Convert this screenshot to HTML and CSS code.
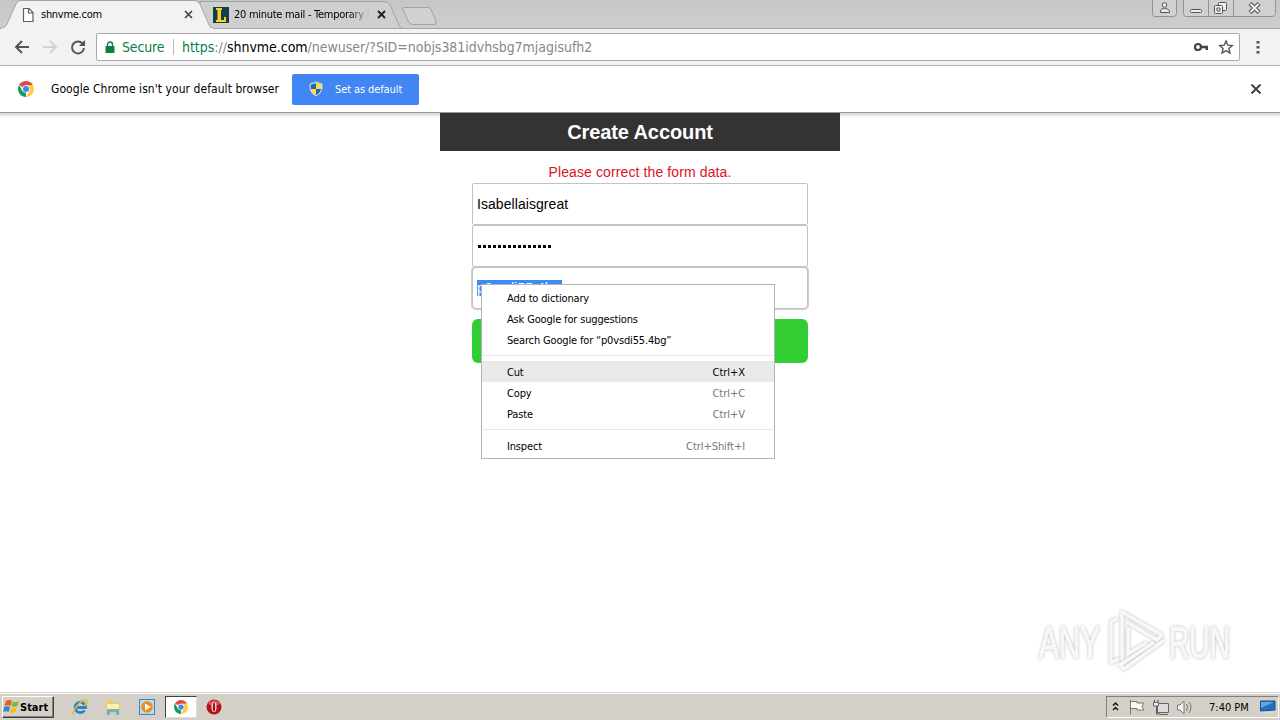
FILE: index.html
```html
<!DOCTYPE html>
<html lang="en">
<head>
<meta charset="utf-8">
<title>Create Account</title>
<link rel="stylesheet" href="styles.css">
</head>
<body>
<svg width="0" height="0" class="defs">
  <symbol id="chrome" viewBox="0 0 16 16">
    <path fill="#dd4b3e" d="M8 8 1.1 4A8 8 0 0 1 14.9 4Z"/>
    <path fill="#109d58" d="M8 8 8 16A8 8 0 0 1 1.1 4L4.5 10Z"/>
    <path fill="#ffcd42" d="M8 8 8 4H14.9A8 8 0 0 1 8 16L11.5 10Z"/>
    <circle cx="8" cy="8" r="3.8" fill="#f5f5f5"/><circle cx="8" cy="8" r="3" fill="#4285f4"/>
  </symbol>
</svg>

<header class="tabstrip">
  <svg class="tab-shapes" width="1280" height="29">
    <path d="M200 1.500H384Q388 1.500 390 5L399 25Q400 28.500 404 28.500H200Z" fill="#cfcfcf" stroke="#a2a2a2"/>
    <path d="M404 7.500H428Q430 7.500 431 9.500L436 21Q437 24.500 434 24.500H413Q410 24.500 409 22.500L403 10Q402 7.500 404 7.500Z" fill="#d1d1d1" stroke="#a2a2a2"/>
    <path d="M0 28.500H1280" stroke="#a5a5a5"/>
    <path d="M0 29V28.500Q5 28.500 7 24L16 4Q17.500.5 21 .5H194Q198 .5 200 4L209 25Q210.500 28.500 214 28.500V29Z" fill="#f2f2f2" stroke="#a5a5a5"/>
    <path d="M2 29H213" stroke="#f2f2f2" stroke-width="2"/>
  </svg>
  <div class="tab tab-one">
    <svg width="16" height="16" viewBox="0 0 16 16"><path d="M3.500 1.500H9L13 5.500V14.500H3.500ZM8.500 1.500V6H13" fill="#fff" stroke="#606060" stroke-width="1.200"/></svg>
    <span class="tab-title">shnvme.com</span>
    <svg class="tab-close" width="9" height="9" viewBox="0 0 9 9"><path d="M1 1 8 8M8 1 1 8" stroke="#444" stroke-width="1.700"/></svg>
  </div>
  <div class="tab tab-two">
    <svg width="16" height="16" viewBox="0 0 16 16"><path fill="#123f4c" d="M0 0H16V16H0Z"/><path d="M3 1H9V3H8V13H11V10H13V15H3V13H4.500V3H3Z" fill="#ffd11a"/></svg>
    <span class="tab-title faded">20 minute mail - Temporary E</span>
    <svg class="tab-close" width="9" height="9" viewBox="0 0 9 9"><path d="M1 1 8 8M8 1 1 8" stroke="#222" stroke-width="1.900"/></svg>
  </div>
  <svg class="window-buttons" width="130" height="18" viewBox="1150 0 130 18">
    <g fill="#d0d0d0" stroke="#929292"><path d="M1152.500 0V13.500Q1152.500 16.500 1155 16.500H1173Q1176.500 16.500 1176.500 13.500V0"/><path d="M1183.500 0V13.500Q1183.500 16.500 1186 16.500H1272Q1275.500 16.500 1275.500 13.500V0M1208.500 0V16M1233.500 0V16"/></g>
    <g fill="#eee" stroke="#555"><circle cx="1164.500" cy="5" r="2.300"/><path d="M1160.500 12.500V11Q1160.500 8.500 1164.500 8.500T1169.500 11V12.500Z"/><rect x="1190.500" y="9.500" width="11" height="3" rx="1"/><rect x="1218.500" y="2.500" width="8" height="8" rx="1"/><rect x="1214.500" y="5.500" width="8" height="8" rx="1"/><path d="M1217 8H1220V11H1217Z"/></g>
    <path d="M1250 3.500 1259 12.500M1259 3.500 1250 12.500" stroke="#555" stroke-width="4.200"/><path d="M1250.500 4 1258.500 12M1258.500 4 1250.500 12" stroke="#f4f4f4" stroke-width="2"/>
  </svg>
</header>

<nav class="toolbar">
  <svg class="nav-icons" width="96" height="36" viewBox="0 29 96 36" fill="none">
    <path d="M29 47H16.500M22 41 16 47 22 53" stroke="#555" stroke-width="2"/>
    <path d="M43 47H55.500M50 41 56 47 50 53" stroke="#d2d2d2" stroke-width="2"/>
    <path d="M82.500 43.500A6 6 0 1 0 84 48" stroke="#555" stroke-width="2"/><path d="M85 40V46H79Z" fill="#555"/>
  </svg>
  <div class="omnibox">
    <svg width="10" height="13" viewBox="0 0 10 13"><path d="M.5 5H9.500V12H.5Z" fill="#0b8043"/><path d="M2.500 5V3.500A2.500 2.500 0 0 1 7.500 3.500V5" fill="none" stroke="#0b8043" stroke-width="1.400"/></svg>
    <span class="secure">Secure</span>
    <span class="url"><span class="scheme">https</span>://<span class="host">shnvme.com</span><span class="path">/newuser/?SID=nobjs381idvhsbg7mjagisufh2</span></span>
    <svg class="omni-icons" width="44" height="18" viewBox="1194 38 44 18"><circle cx="1198" cy="47" r="3" fill="none" stroke="#444" stroke-width="2.200"/><path d="M1201 45.800H1208V50H1205.500V48.300H1201Z" fill="#444"/><path d="M1226 41 1227.800 45.200 1232.300 45.600 1228.900 48.500 1230 53 1226 50.600 1222 53 1223.100 48.500 1219.700 45.600 1224.200 45.200Z" fill="none" stroke="#555" stroke-width="1.400"/></svg>
  </div>
  <svg class="more" width="4" height="14" viewBox="0 0 4 14" fill="#555"><path d="M.5 1H3.500V3.500H.5ZM.5 6H3.500V8.500H.5ZM.5 11H3.500V13.500H.5Z"/></svg>
</nav>

<section class="infobar">
  <svg width="16" height="16"><use href="#chrome"/></svg>
  <span class="info-text">Google Chrome isn't your default browser</span>
  <button class="default-btn">
    <svg width="14" height="16" viewBox="0 0 14 16"><path d="M7 1Q10 2.500 13 3V7Q12.500 12 7 15Q1.500 12 1 7V3Q4 2.500 7 1Z" fill="#ffd84d"/><path d="M7 2V8H1.500V3.500Q5 3.200 7 2ZM7 8H12.500Q11.500 12 7 14.500Z" fill="#1769b5"/><path d="M7 1Q10 2.500 13 3V7Q12.500 12 7 15Q1.500 12 1 7V3Q4 2.500 7 1Z" fill="none" stroke="#cddcec"/></svg>
    <span class="btn-text">Set as default</span>
  </button>
  <svg class="info-close" width="10" height="10" viewBox="0 0 10 10"><path d="M.5.5 9.500 9.500M9.500.5.5 9.500" stroke="#444" stroke-width="2"/></svg>
</section>

<main class="page">
  <div class="account">
    <h1 class="title"><span>Create Account</span></h1>
    <p class="error"><span>Please correct the form data.</span></p>
    <div class="field"><span class="user">Isabellaisgreat</span></div>
    <div class="field"><span class="dots"></span></div>
    <div class="field focused"><span class="selected">p0vsdi55.4bg</span></div>
    <div class="submit"></div>
  </div>
  <svg class="watermark" width="204" height="72" viewBox="1034 604 204 72">
    <g class="mark-text"><text x="1039" y="658" textLength="61" lengthAdjust="spacingAndGlyphs">ANY</text><text x="1169" y="658" textLength="61" lengthAdjust="spacingAndGlyphs">RUN</text></g>
    <g class="mark-logo" fill="none" stroke-linejoin="round" stroke-linecap="round"><path d="M1116 619 1111 622V663L1118 659"/><path d="M1122 659V612L1162 635 1157 640 1127 622M1128 629V654L1146 643"/><path d="M1163 641 1124 669 1120 665 1153 643"/></g>
  </svg>
</main>

<div class="menu">
  <div class="item"><span>Add to dictionary</span></div>
  <div class="item"><span>Ask Google for suggestions</span></div>
  <div class="item"><span>Search Google for “p0vsdi55.4bg”</span></div>
  <div class="sep"></div>
  <div class="item active"><span>Cut</span><span class="key">Ctrl+X</span></div>
  <div class="item"><span>Copy</span><span class="key">Ctrl+C</span></div>
  <div class="item"><span>Paste</span><span class="key">Ctrl+V</span></div>
  <div class="sep last"></div>
  <div class="item"><span>Inspect</span><span class="key">Ctrl+Shift+I</span></div>
</div>

<footer class="taskbar">
  <div class="start">
    <svg width="17" height="16" viewBox="0 0 17 16"><path d="M3 2Q6 0 9 2L7.500 7Q4 5.500 1.500 7Z" fill="#ed5a24"/><path d="M10 2.500Q13 4 16 2L14.500 7Q11 8.500 8.500 7Z" fill="#80b931"/><path d="M1.200 8Q4 6.500 7 8L5.500 13Q3 11.500 0 13Z" fill="#3187d0"/><path d="M8 8.500Q11 10 14 8L12.500 13Q9 15 6.500 13.500Z" fill="#f7bd24"/></svg>
    <span>Start</span>
  </div>
  <svg class="launch" width="90" height="20" viewBox="70 697 90 20">
    <path d="M84.500 710.500A5.200 5.200 0 1 1 85.500 707.500H76" fill="none" stroke="#2383cb" stroke-width="2.800"/><path d="M74 714Q71 714 77 706T87 701Q86 705 84 706" fill="none" stroke="#e9b927" stroke-width="1.500"/>
    <path d="M106 701H112L113 703H120V714H106Z" fill="#eecb62"/><path d="M107 704H119V709H107Z" fill="#fff0a4"/><path d="M107 709H119V715H116V712H110V715H107Z" fill="#67b2dc"/>
    <rect x="139.500" y="699.500" width="15" height="15" fill="#b9dcf5" stroke="#3c86bf"/><circle cx="147" cy="707" r="5.800" fill="#f28b17"/><path d="M145 703.500 151 707 145 710.500Z" fill="#fff"/>
  </svg>
  <div class="active-task"><svg width="14" height="14"><use href="#chrome"/></svg></div>
  <svg class="opera" width="16" height="16" viewBox="0 0 16 16"><circle cx="8" cy="8" r="7.500" fill="#b31318"/><path d="M2 5A6.500 6 0 0 1 14 5Q8 8 2 5" fill="#dc5556"/><ellipse cx="8" cy="8" rx="2.500" ry="5" fill="#f3e7e5"/><ellipse cx="8" cy="8" rx="1.200" ry="4.500" fill="#9c1014"/></svg>
  <div class="tray">
    <svg width="86" height="20" viewBox="1108 697 86 20" fill="none">
      <path d="M1113 705.500 1115.500 703 1118 705.500M1113 710 1115.500 707.500 1118 710" stroke="#111" stroke-width="1.500"/>
      <path d="M1130.500 700V714.500M1131 701.500H1137V703H1144L1142 706.500 1144 710H1137V708.500H1131" stroke="#777" fill="#f8f8f8"/>
      <path d="M1157.500 703.500H1168.500V712.500H1157.500ZM1160 714.500H1168" fill="#ddd" stroke="#666"/><path d="M1154.500 700V704H1158V700M1156.500 704V714H1160" stroke="#555"/><path d="M1153.500 702.500H1158.500V706H1153.500Z" fill="#eee" stroke="#666"/>
      <path d="M1177.500 705H1180L1184 701V714L1180 710H1177.500Z" fill="#f5f5f5" stroke="#777"/><path d="M1186.500 704Q1188.500 707 1186.500 711M1189 702Q1193 707 1189 713" stroke="#777"/>
    </svg>
    <span class="clock">7:40 PM</span>
    <svg class="desk" width="16" height="14" viewBox="0 0 16 14"><path d="M.5 1H15V10L.5 11Z" fill="#246fc2" stroke="#174d92"/><path d="M1 2H14L1 8Z" fill="#62a8e5"/><path d="M3 12.500H13" stroke="#ddd"/></svg>
  </div>
</footer>
</body>
</html>
```
FILE: styles.css
```css
* { box-sizing: border-box; }
body { margin: 0; width: 1280px; height: 720px; overflow: hidden; display: flex; flex-direction: column; background: #fff; color: #000; font-family: "DejaVu Sans Condensed", "DejaVu Sans", sans-serif; font-stretch: condensed; font-size: 11px; position: relative; }
svg { flex: none; display: block; }
.defs { position: absolute; }
span { white-space: nowrap; }
.tabstrip { position: relative; height: 29px; flex: none; background: linear-gradient(#c6c6c6, #cecece); display: flex; }
.tab-shapes { position: absolute; left: 0; top: 0; }
.tab { position: relative; display: flex; align-items: center; height: 29px; }
.tab-one { width: 193px; padding-left: 20px; }
.tab-two { width: 193px; padding-left: 20px; }
.tab-title { margin-left: 5px; letter-spacing: -.28px; }
.tab-two .tab-title { width: 136px; overflow: hidden; }
.faded { -webkit-mask-image: linear-gradient(90deg, #000 115px, transparent 136px); }
.tab-close { margin-left: auto; }
.window-buttons { margin-left: auto; position: relative; }
.toolbar { height: 37px; flex: none; display: flex; align-items: center; background: #f2f2f2; border-bottom: 1px solid #b5b5b5; }
.omnibox { width: 1144px; height: 28px; display: flex; align-items: center; background: #fff; border: 1px solid #a8a8a8; border-radius: 2px; padding-left: 8px; font-size: 14px; }
.secure { width: 52px; margin-left: 7px; color: #0b8043; letter-spacing: -.15px; border-right: 1px solid #bbb; line-height: 16px; }
.url { margin-left: 8px; color: #888; letter-spacing: -.03px; }
.scheme { color: #0b8043; }
.host { color: #000; }
.omni-icons { margin-left: auto; margin-right: 1px; }
.more { margin-left: 16px; }
.infobar { height: 47px; flex: none; display: flex; align-items: center; padding-left: 18px; border-bottom: 1px solid #999; }
.info-text { width: 229px; margin-left: 17px; font-size: 12px; letter-spacing: .06px; }
.default-btn { width: 127px; height: 31px; margin-left: 12px; padding: 0 0 0 17px; display: flex; align-items: center; gap: 12px; background: #4285f4; color: #fff; border: 0; border-radius: 2px; font: inherit; letter-spacing: -.1px; }
.info-close { margin-left: auto; margin-right: 19px; }
.page { position: relative; height: 579px; flex: none; background: linear-gradient(#d5d5d5, #fff 5px); font-family: "Liberation Sans", Arial, sans-serif; }
.account { width: 400px; margin: 0 auto; }
.title { margin: 0; height: 38px; background: #333; color: #fff; font-size: 20px; line-height: 38px; text-align: center; letter-spacing: -.1px; }
.error { margin: 0; height: 32px; padding-top: 13px; font-size: 14px; line-height: 17px; color: #d8141c; text-align: center; letter-spacing: .11px; }
.field { width: 336px; height: 42px; margin: 0 auto; display: flex; align-items: center; padding-left: 4px; border: 1px solid #c2c2c2; border-radius: 2px; font-size: 14px; background: #fff; }
.user { letter-spacing: .06px; }
.dots { width: 75px; height: 3px; margin-left: 1px; background: repeating-linear-gradient(90deg, #000 0 3px, #fff 3px 5px); }
.focused { border-radius: 4px; box-shadow: 0 0 1px 1px #ccc; }
.selected { background: #3c8cf5; color: #fff; width: 85px; line-height: 16px; }
.submit { width: 336px; height: 44px; margin: 10px auto 0; border-radius: 6px; background: #32cd32; }
.watermark { position: absolute; left: 1034px; top: 491px; filter: drop-shadow(0 0 1.5px #bbb); }
.mark-text { font: 45px "Liberation Sans", sans-serif; fill: #f8f8f8; stroke: #f8f8f8; stroke-width: 1.2px; }
.mark-logo { stroke: #f8f8f8; stroke-width: 3.5px; }
.menu { position: absolute; left: 481px; top: 284px; width: 294px; height: 175px; padding-top: 3px; border: 1px solid #b3b3b3; background: #fff; }
.item { height: 21px; display: flex; align-items: center; justify-content: space-between; padding: 0 29px 0 25px; letter-spacing: -.16px; }
.sep ~ .item span { padding-top: 1px; }
.key { color: #777; letter-spacing: -.05px; }
.active { background: #e9e9e9; }
.active .key { color: #000; }
.sep { height: 10px; border-top: 1px solid #e6e6e6; margin: 4px 1px -4px; }
.sep.last { margin: 5px 1px -4px; }
.taskbar { height: 28px; flex: none; display: flex; align-items: center; background: #d4d0c8; border-top: 1px solid #d4d0c8; box-shadow: inset 0 1px #fff; padding-top: 1px; }
.start { width: 52px; height: 22px; margin-left: 2px; display: flex; align-items: center; border: 1px solid; border-color: #fff #404040 #404040 #fff; box-shadow: inset -1px -1px #808080; font-weight: bold; letter-spacing: 0; padding-left: 0; }
.launch { margin-left: 16px; }
.active-task { width: 32px; height: 22px; margin-left: 5px; display: flex; align-items: center; justify-content: center; background: #fff; border: 1px solid; border-color: #404040 #ddd #ddd #404040; }
.opera { margin-left: 9px; }
.tray { width: 173px; height: 22px; margin-left: auto; margin-right: 1px; display: flex; align-items: center; border: 1px solid; border-color: #808080 #fff #fff #808080; padding-left: 1px; }
.clock { margin-left: 15px; }
.desk { margin-left: auto; margin-right: 2px; }
```
